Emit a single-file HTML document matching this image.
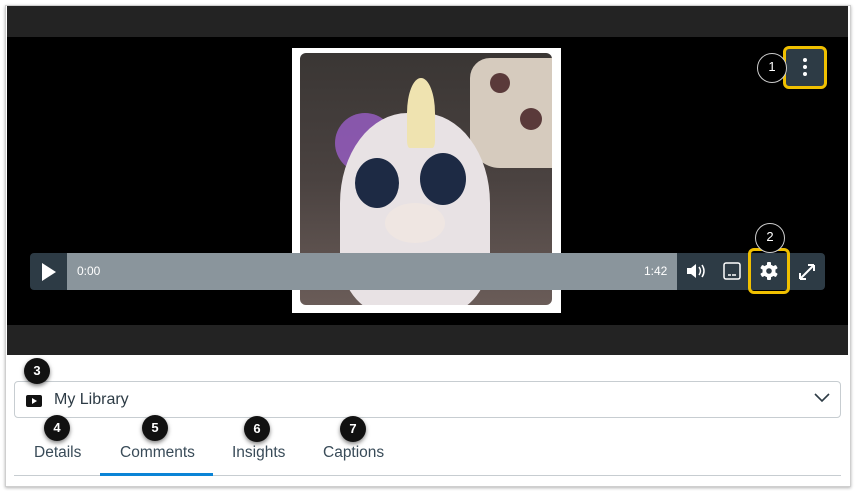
<!DOCTYPE html>
<html><head><style>
body{margin:0;width:855px;height:491px;background:#fff;font-family:"Liberation Sans",sans-serif;position:relative;overflow:hidden}
.a{position:absolute}
.badge{position:absolute;width:26px;height:26px;border-radius:50%;background:#111;color:#fff;font-size:13px;font-weight:bold;text-align:center;line-height:26px;box-shadow:0 2px 4px rgba(0,0,0,.5)}
.tab{position:absolute;top:444px;font-size:15.5px;color:#394b58}
</style></head><body>
<div class="a" style="left:5px;top:5px;width:844px;height:480px;border:1px solid #cfcfcf;box-shadow:0 1px 3px rgba(0,0,0,.3)"></div>
<div class="a" style="left:7px;top:6px;width:841px;height:31px;background:#232323"></div>
<div class="a" style="left:7px;top:37px;width:841px;height:288px;background:#000"></div>
<div class="a" style="left:7px;top:325px;width:841px;height:30px;background:#232323"></div>
<div class="a" style="left:292px;top:48px;width:269px;height:265px;background:#fff"></div>
<div class="a" style="left:300px;top:53px;width:252px;height:252px;border-radius:6px;overflow:hidden;background:linear-gradient(180deg,#3a3634 0%,#4a4240 50%,#6a5c58 100%)">
 <div class="a" style="left:170px;top:5px;width:82px;height:110px;background:#d6cbbe;border-radius:20px 0 0 30px"></div>
 <div class="a" style="left:190px;top:20px;width:20px;height:20px;border-radius:50%;background:#5a3a3a"></div>
 <div class="a" style="left:220px;top:55px;width:22px;height:22px;border-radius:50%;background:#5a3a3a"></div>
 <div class="a" style="left:35px;top:60px;width:60px;height:60px;border-radius:50%;background:#9a5ec8;opacity:.8"></div>
 <div class="a" style="left:40px;top:60px;width:150px;height:200px;border-radius:45% 45% 30% 30%;background:#e8e2e4"></div>
 <div class="a" style="left:107px;top:25px;width:28px;height:70px;border-radius:50% 50% 10% 10%;background:#efe3b0"></div>
 <div class="a" style="left:55px;top:105px;width:44px;height:50px;border-radius:50%;background:#1d2a44"></div>
 <div class="a" style="left:120px;top:100px;width:46px;height:52px;border-radius:50%;background:#1d2a44"></div>
 <div class="a" style="left:85px;top:150px;width:60px;height:40px;border-radius:50%;background:#efe6e2"></div>
</div>
<div class="a" style="left:30px;top:253px;width:795px;height:37px;background:#2d3b45;border-radius:4px"></div>
<div class="a" style="left:67px;top:253px;width:610px;height:37px;background:#8a959c"></div>
<svg class="a" style="left:40px;top:262px" width="18" height="20"><path d="M2 1 L16 10 L2 19Z" fill="#fff"/></svg>
<div class="a" style="left:77px;top:264px;font-size:12px;color:#fff">0:00</div>
<div class="a" style="left:644px;top:264px;font-size:12px;color:#fff">1:42</div>
<svg class="a" style="left:685px;top:262px" width="22" height="18"><path d="M2 6h4l5-4v14l-5-4H2z" fill="#fff"/><path d="M14 5q3 4 0 8M17 3q4 6 0 12" stroke="#fff" stroke-width="1.5" fill="none"/></svg>
<svg class="a" style="left:723px;top:262px" width="18" height="18"><rect x="1" y="1" width="16" height="16" rx="2" stroke="#fff" stroke-width="1.5" fill="none"/><path d="M5 13h3M9 13h4" stroke="#fff" stroke-width="1.5"/></svg>
<div class="a" style="left:748px;top:248px;width:42px;height:46px;border:3px solid #f0c000;border-radius:6px;box-sizing:border-box"></div>
<svg class="a" style="left:759px;top:261px" width="20" height="20" viewBox="0 0 20 20"><g fill="#fff"><circle cx="10" cy="10" r="6.5"/><g><rect x="8" y="1" width="4" height="18" rx="1"/><rect x="8" y="1" width="4" height="18" rx="1" transform="rotate(60 10 10)"/><rect x="8" y="1" width="4" height="18" rx="1" transform="rotate(120 10 10)"/></g></g><circle cx="10" cy="10" r="2.8" fill="#2d3b45"/></svg>
<svg class="a" style="left:797px;top:262px" width="20" height="20"><path d="M3 17L17 3M3 17v-6M3 17h6M17 3v6M17 3h-6" stroke="#fff" stroke-width="2" fill="none"/></svg>
<div class="badge" style="left:755px;top:223px;background:#000;border:1px solid #ccc;width:28px;height:28px;font-weight:normal;box-shadow:none">2</div>
<div class="a" style="left:783px;top:46px;width:44px;height:43px;border:3px solid #f0c000;border-radius:6px;box-sizing:border-box;background:#2d3b45"></div>
<svg class="a" style="left:801px;top:56px" width="8" height="22"><circle cx="4" cy="4" r="2" fill="#fff"/><circle cx="4" cy="11" r="2" fill="#fff"/><circle cx="4" cy="18" r="2" fill="#fff"/></svg>
<div class="badge" style="left:757px;top:53px;background:#000;border:1px solid #ccc;width:28px;height:28px;font-weight:normal;box-shadow:none">1</div>
<div class="a" style="left:14px;top:381px;width:827px;height:37px;border:1px solid #c7cdd1;border-radius:4px;box-sizing:border-box"></div>
<svg class="a" style="left:26px;top:394px" width="16" height="14"><rect x="0" y="1" width="16" height="12" rx="2" fill="#111"/><path d="M6 4l5 3-5 3z" fill="#fff"/></svg>
<div class="a" style="left:54px;top:391px;font-size:16px;color:#2d3b45">My Library</div>
<svg class="a" style="left:814px;top:393px" width="16" height="10"><path d="M1 1l7 7 7-7" stroke="#2d3b45" stroke-width="1.6" fill="none"/></svg>
<div class="badge" style="left:24px;top:358px">3</div>
<div class="a" style="left:14px;top:475px;width:827px;height:1px;background:#c7cdd1"></div>
<div class="a" style="left:100px;top:473px;width:113px;height:3px;background:#0a84d6"></div>
<div class="tab" style="left:34px">Details</div>
<div class="tab" style="left:120px">Comments</div>
<div class="tab" style="left:232px">Insights</div>
<div class="tab" style="left:323px">Captions</div>
<div class="badge" style="left:44px;top:415px">4</div>
<div class="badge" style="left:142px;top:415px">5</div>
<div class="badge" style="left:244px;top:416px">6</div>
<div class="badge" style="left:340px;top:416px">7</div>
</body></html>
